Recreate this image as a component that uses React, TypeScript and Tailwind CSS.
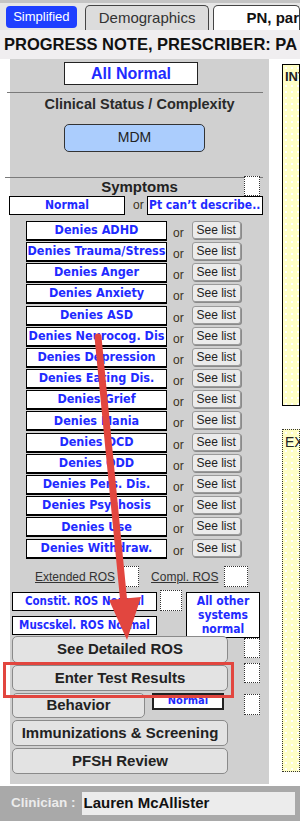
import React from 'react'

const sym = [
  'Denies ADHD',
  'Denies Trauma/Stress',
  'Denies Anger',
  'Denies Anxiety',
  'Denies ASD',
  'Denies Neurocog. Dis',
  'Denies Depression',
  'Denies Eating Dis.',
  'Denies Grief',
  'Denies Mania',
  'Denies OCD',
  'Denies ODD',
  'Denies Pers. Dis.',
  'Denies Psychosis',
  'Denies Use',
  'Denies Withdraw.',
]

const tahoma = "font-['DejaVu_Sans_Condensed','DejaVu_Sans',sans-serif] font-bold text-[#1f2bff]"
const btn =
  'flex items-center justify-center rounded-[5px] border border-[#8a8a8a] bg-[#e3e3e3] text-[15px] font-bold text-[#222]'

function Check({ className = '' }: { className?: string }) {
  return <div className={'border border-dotted border-[#333] bg-white ' + className} />
}

function Row({ label }: { label: string }) {
  return (
    <div className="flex h-[21.2px] items-start">
      <div
        className={
          'ml-[16px] flex h-[20px] w-[141px] items-center justify-center whitespace-nowrap border border-b-2 border-black bg-white text-[12.5px] ' +
          tahoma
        }
      >
        {label}
      </div>
      <span className="ml-[6px] mt-[3px] text-[12px] text-[#3a3020]">or</span>
      <div className="ml-[8px] flex h-[18px] w-[49px] items-center justify-center rounded-[3px] border border-[#9a9a9a] bg-[#ebebeb] text-[12px] text-[#222] shadow-[1px_1px_0_#8a8a8a]">
        See list
      </div>
    </div>
  )
}

export default function App() {
  return (
    <div className="relative h-[826px] w-[300px] overflow-hidden bg-white font-['Liberation_Sans',Arial,sans-serif]">
      {/* tabs */}
      <div className="flex h-[30px] items-end border-t-[3px] border-[#c4c4c4] bg-[#e6e6e6]">
        <div className="mb-[2px] ml-[6px] flex h-[22px] w-[72px] items-center justify-center rounded-[4px] bg-[#1e3fff] text-[13px] text-white">
          Simplified
        </div>
        <div className="ml-[8px] flex h-[25px] w-[127px] items-center justify-center rounded-t-[5px] border border-b-0 border-[#444] bg-[#dcdcdc] text-[15px] text-[#333]">
          Demographics
        </div>
        <div className="ml-[4px] flex h-[25px] flex-1 items-center whitespace-nowrap rounded-t-[5px] border border-b-0 border-[#444] bg-white pl-[32px] text-[15px] font-bold text-[#111]">
          PN, par
        </div>
      </div>
      {/* title */}
      <div className="flex h-[29px] items-center whitespace-nowrap bg-[#f0eef0] pl-[4px] text-[16.5px] font-bold text-[#111]">
        PROGRESS NOTE, PRESCRIBER: PA
      </div>

      <div className="flex">
        {/* left panel */}
        <div className="ml-[10px] h-[725px] w-[259px] bg-[#d0d0d0]">
          <div className="ml-[54px] mt-[3px] flex h-[23px] w-[134px] items-center justify-center border border-[#222] bg-white text-[16px] font-bold text-[#1f2bff]">
            All Normal
          </div>
          <div className="mt-[7px] h-px w-[256px] -ml-[3px] bg-[#7a7a7a]" />
          <div className="mt-[1px] text-center text-[14.5px] font-bold text-[#2a2a2a]">Clinical Status / Complexity</div>
          <div className="ml-[54px] mt-[8px] flex h-[28px] w-[141px] items-center justify-center rounded-[5px] border border-[#333] bg-[#abcdfd] text-[14px] text-[#222]">
            MDM
          </div>
          <div className="mt-[25px] h-px w-[258px] -ml-[5px] bg-[#7a7a7a]" />
          <div className="relative h-[20px]">
            <div className="-mt-[2px] text-center text-[15px] font-bold text-[#222]">Symptoms</div>
            <Check className="absolute left-[234px] top-0 h-[20px] w-[16px]" />
          </div>
          <div className="-ml-[1px] flex h-[25px] items-start">
            <div className={'flex h-[19px] w-[116px] items-center justify-center border border-black bg-white text-[12px] ' + tahoma}>
              Normal
            </div>
            <span className="ml-[8px] text-[12px] text-[#3a3020]">or</span>
            <div className={'ml-[3px] flex h-[19px] w-[116px] items-center justify-center whitespace-nowrap border border-black bg-white text-[12px] ' + tahoma}>
              Pt can’t describe..
            </div>
          </div>
          <div className="flex flex-col">
            {sym.map((s) => (
              <Row key={s} label={s} />
            ))}
          </div>
          {/* ROS */}
          <div className="mt-[6px] flex h-[22px] items-center">
            <span className="ml-[25px] text-[12px] text-[#333] underline">Extended ROS</span>
            <Check className="ml-[4px] h-[21px] w-[20px]" />
            <span className="ml-[12px] text-[12px] text-[#333] underline">Compl. ROS</span>
            <Check className="ml-[6px] h-[21px] w-[24px]" />
          </div>
          <div className="mt-[2px] flex">
            <div className="ml-[2px] flex flex-col gap-[5px] pt-[2px]">
              <div className="flex items-start">
                <div className={'flex h-[19px] w-[145px] items-center justify-center whitespace-nowrap border border-black bg-white text-[11.5px] ' + tahoma}>
                  Constit. ROS Normal
                </div>
                <Check className="-mt-[2px] ml-[3px] h-[21px] w-[22px]" />
              </div>
              <div className={'flex h-[19px] w-[145px] items-center justify-center whitespace-nowrap border border-black bg-white text-[11.5px] ' + tahoma}>
                Muscskel. ROS Normal
              </div>
            </div>
            <div className={'ml-[4px] mt-[2px] flex h-[46px] w-[74px] items-center justify-center border border-black bg-white text-center text-[12px] leading-[14px] ' + tahoma}>
              All other systems normal
            </div>
          </div>
          {/* buttons */}
          <div className="relative -mt-[2px] flex flex-col gap-[2px] pl-[2px]">
            <div className={btn + ' h-[27px] w-[216px]'}>See Detailed ROS</div>
            <div className={btn + ' h-[26px] w-[216px]'}>Enter Test Results</div>
            <div className="flex items-start">
              <div className={btn + ' h-[25px] w-[133px]'}>Behavior</div>
              <div className={'ml-[7px] flex h-[17px] w-[72px] items-center justify-center border-2 border-[#222] bg-white text-[11px] ' + tahoma}>
                Normal
              </div>
            </div>
            <div className={btn + ' h-[26px] w-[216px]'}>Immunizations &amp; Screening</div>
            <div className={btn + ' h-[26px] w-[216px]'}>PFSH Review</div>
            <Check className="absolute left-[234px] top-[2px] h-[20px] w-[16px]" />
            <Check className="absolute left-[234px] top-[27px] h-[20px] w-[16px]" />
            <Check className="absolute left-[234px] top-[58px] h-[21px] w-[16px]" />
          </div>
        </div>
        {/* right column */}
        <div className="ml-[13px] flex min-w-0 flex-1 flex-col overflow-hidden pt-[5px]">
          <div className="h-[342px] border border-black bg-[#ffffc6] bg-[radial-gradient(circle,#ffffff_0.8px,transparent_1px)] bg-[length:6px_6px] pl-[2px] pt-[2px] text-[13px] font-bold text-[#222]">
            INT
          </div>
          <div className="mt-[23px] h-[343px] border border-dotted border-[#333] bg-[#ffffc6] bg-[radial-gradient(circle,#ffffff_0.8px,transparent_1px)] bg-[length:6px_6px] pl-[2px] pt-[2px] text-[14px] text-[#222]">
            EX
          </div>
        </div>
      </div>

      {/* footer */}
      <div className="mt-[2px] flex h-[35px] items-center bg-[#a9a9a9]">
        <span className="ml-[11px] text-[13.5px] font-bold text-[#ececec]">Clinician :</span>
        <div className="ml-[6px] flex h-[23px] w-[213px] items-center bg-[#ececec] pl-[2px] text-[15px] font-bold text-[#111]">
          Lauren McAllister
        </div>
      </div>

      {/* annotations */}
      <div className="pointer-events-none absolute left-[3px] top-[662px] h-[36px] w-[231px] border-[3px] border-[#e2463f]" />
      <svg className="pointer-events-none absolute left-0 top-0" width="300" height="826">
        <line x1="98" y1="337" x2="124" y2="604" stroke="#e2463f" strokeWidth="7" strokeLinecap="round" />
        <polygon points="109,600 141,597 127,640" fill="#e2463f" />
      </svg>
    </div>
  )
}
